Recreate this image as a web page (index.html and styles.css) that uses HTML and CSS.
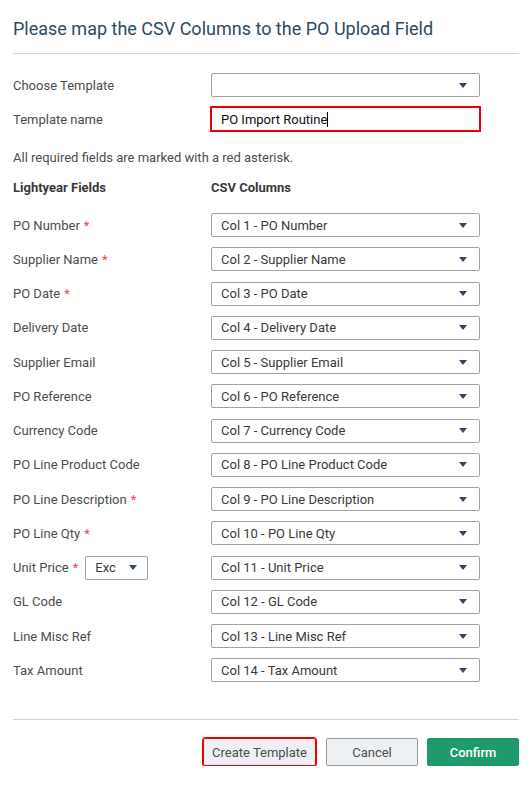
FILE: index.html
```html
<!DOCTYPE html>
<html lang="en">
<head>
    <meta charset="UTF-8">
    <meta name="viewport" content="width=device-width, initial-scale=1.0">
    <title>PO Upload</title>
    <link rel="stylesheet" href="styles.css">
</head>
<body>

    <div class="dialog">
        <h2 class="dialog-title">Please map the CSV Columns to the PO Upload Field</h2>

        <div class="template-rows">
            <div class="row">
                <span class="label">Choose Template</span>
                <div class="select"><span></span><i class="caret"></i></div>
            </div>
            <div class="row">
                <span class="label">Template name</span>
                <div class="text-input focused">PO Import Routine<span class="cursor"></span></div>
            </div>
        </div>

        <p class="note">All required fields are marked with a red asterisk.</p>

        <div class="row head">
            <span>Lightyear Fields</span>
            <span>CSV Columns</span>
        </div>

        <!-- filas del mapeo -->
        <div class="map-rows" id="mapRows"></div>

        <div class="footer">
            <button class="btn btn-light highlighted">Create Template</button>
            <button class="btn btn-light">Cancel</button>
            <button class="btn btn-green">Confirm</button>
        </div>
    </div>

    <script>
        const campos = [
            { nombre: "PO Number", req: true },
            { nombre: "Supplier Name", req: true },
            { nombre: "PO Date", req: true },
            { nombre: "Delivery Date" },
            { nombre: "Supplier Email" },
            { nombre: "PO Reference" },
            { nombre: "Currency Code" },
            { nombre: "PO Line Product Code" },
            { nombre: "PO Line Description", req: true },
            { nombre: "PO Line Qty", req: true },
            { nombre: "Unit Price", req: true, tax: true },
            { nombre: "GL Code" },
            { nombre: "Line Misc Ref" },
            { nombre: "Tax Amount" }
        ];

        const mapRows = document.getElementById("mapRows");

        campos.forEach((campo, index) => {
            const row = document.createElement("div");
            row.classList.add("row");

            const asterisco = campo.req ? ' <span class="req">*</span>' : "";
            const tax = campo.tax ? '<div class="select small"><span>Exc</span><i class="caret"></i></div>' : "";

            row.innerHTML = `
                <span class="label">${campo.nombre}${asterisco}${tax}</span>
                <div class="select"><span>Col ${index + 1} - ${campo.nombre}</span><i class="caret"></i></div>
            `;

            mapRows.appendChild(row);
        });
    </script>

</body>
</html>
```

FILE: styles.css
```css
:root {
    --slate: #2e4a62;
    --text: #4d4d4d;
    --border: #a3a3a3;
    --line: #cdd5db;
    --green: #1f9a6d;
    --light: #eef1f4;
    --red: #f00000;
}
* {
    box-sizing: border-box;
}
body {
    margin: 0;
    font-family: Roboto, "Liberation Sans", Arial, sans-serif;
    font-size: 13px;
    color: var(--text);
    background: white;
}
.dialog {
    padding: 18px 10px 0 13px;
}
.dialog-title {
    margin: 0;
    padding-bottom: 14px;
    border-bottom: 1px solid var(--line);
    font-size: 18px;
    font-weight: 400;
    line-height: 21px;
    color: var(--slate);
}
.template-rows {
    display: flex;
    flex-direction: column;
    gap: 10px;
    margin-top: 19px;
}
.row {
    display: grid;
    grid-template-columns: 198px 269px;
    align-items: center;
    height: 24px;
}
.label {
    display: flex;
    align-items: center;
    gap: 4px;
}
.req {
    color: #e5484d;
}
.select {
    display: flex;
    justify-content: space-between;
    align-items: center;
    height: 24px;
    padding: 0 12px 0 9px;
    border: 1px solid var(--border);
    border-radius: 2px;
    background: white;
    color: #3a3a3a;
}
.select.small {
    width: 63px;
    margin-left: 3px;
    padding: 0 10px 0 9px;
}
.caret {
    width: 0;
    height: 0;
    border-left: 4.5px solid transparent;
    border-right: 4.5px solid transparent;
    border-top: 5px solid var(--slate);
}
.text-input {
    display: flex;
    align-items: center;
    height: 24px;
    padding-left: 9px;
    border: 1px solid var(--red);
    outline: 1px solid var(--red);
    color: #111;
}
.cursor {
    display: inline-block;
    width: 1px;
    height: 15px;
    background: #000;
}
.note {
    margin: 19px 0 0;
    line-height: 16px;
}
.head {
    margin-top: 13px;
    height: 16px;
    font-weight: 700;
    color: #3a3a3a;
}
.map-rows {
    display: flex;
    flex-direction: column;
    gap: 10.25px;
    margin-top: 18px;
    padding-bottom: 37px;
    border-bottom: 1px solid var(--line);
}
.footer {
    display: flex;
    justify-content: flex-end;
    gap: 9px;
    margin-top: 18px;
}
.btn {
    min-width: 92px;
    height: 28px;
    padding: 0 8px;
    font-family: inherit;
    font-size: 13px;
    border-radius: 2px;
    cursor: pointer;
}
.btn-light {
    background: var(--light);
    border: 1px solid #9a9a9a;
    color: var(--text);
}
.btn-light.highlighted {
    outline: 1px solid var(--red);
    border-color: var(--red);
    margin-right: 1px;
}
.btn-green {
    background: var(--green);
    border: 1px solid var(--green);
    color: white;
    font-weight: 500;
}
```
